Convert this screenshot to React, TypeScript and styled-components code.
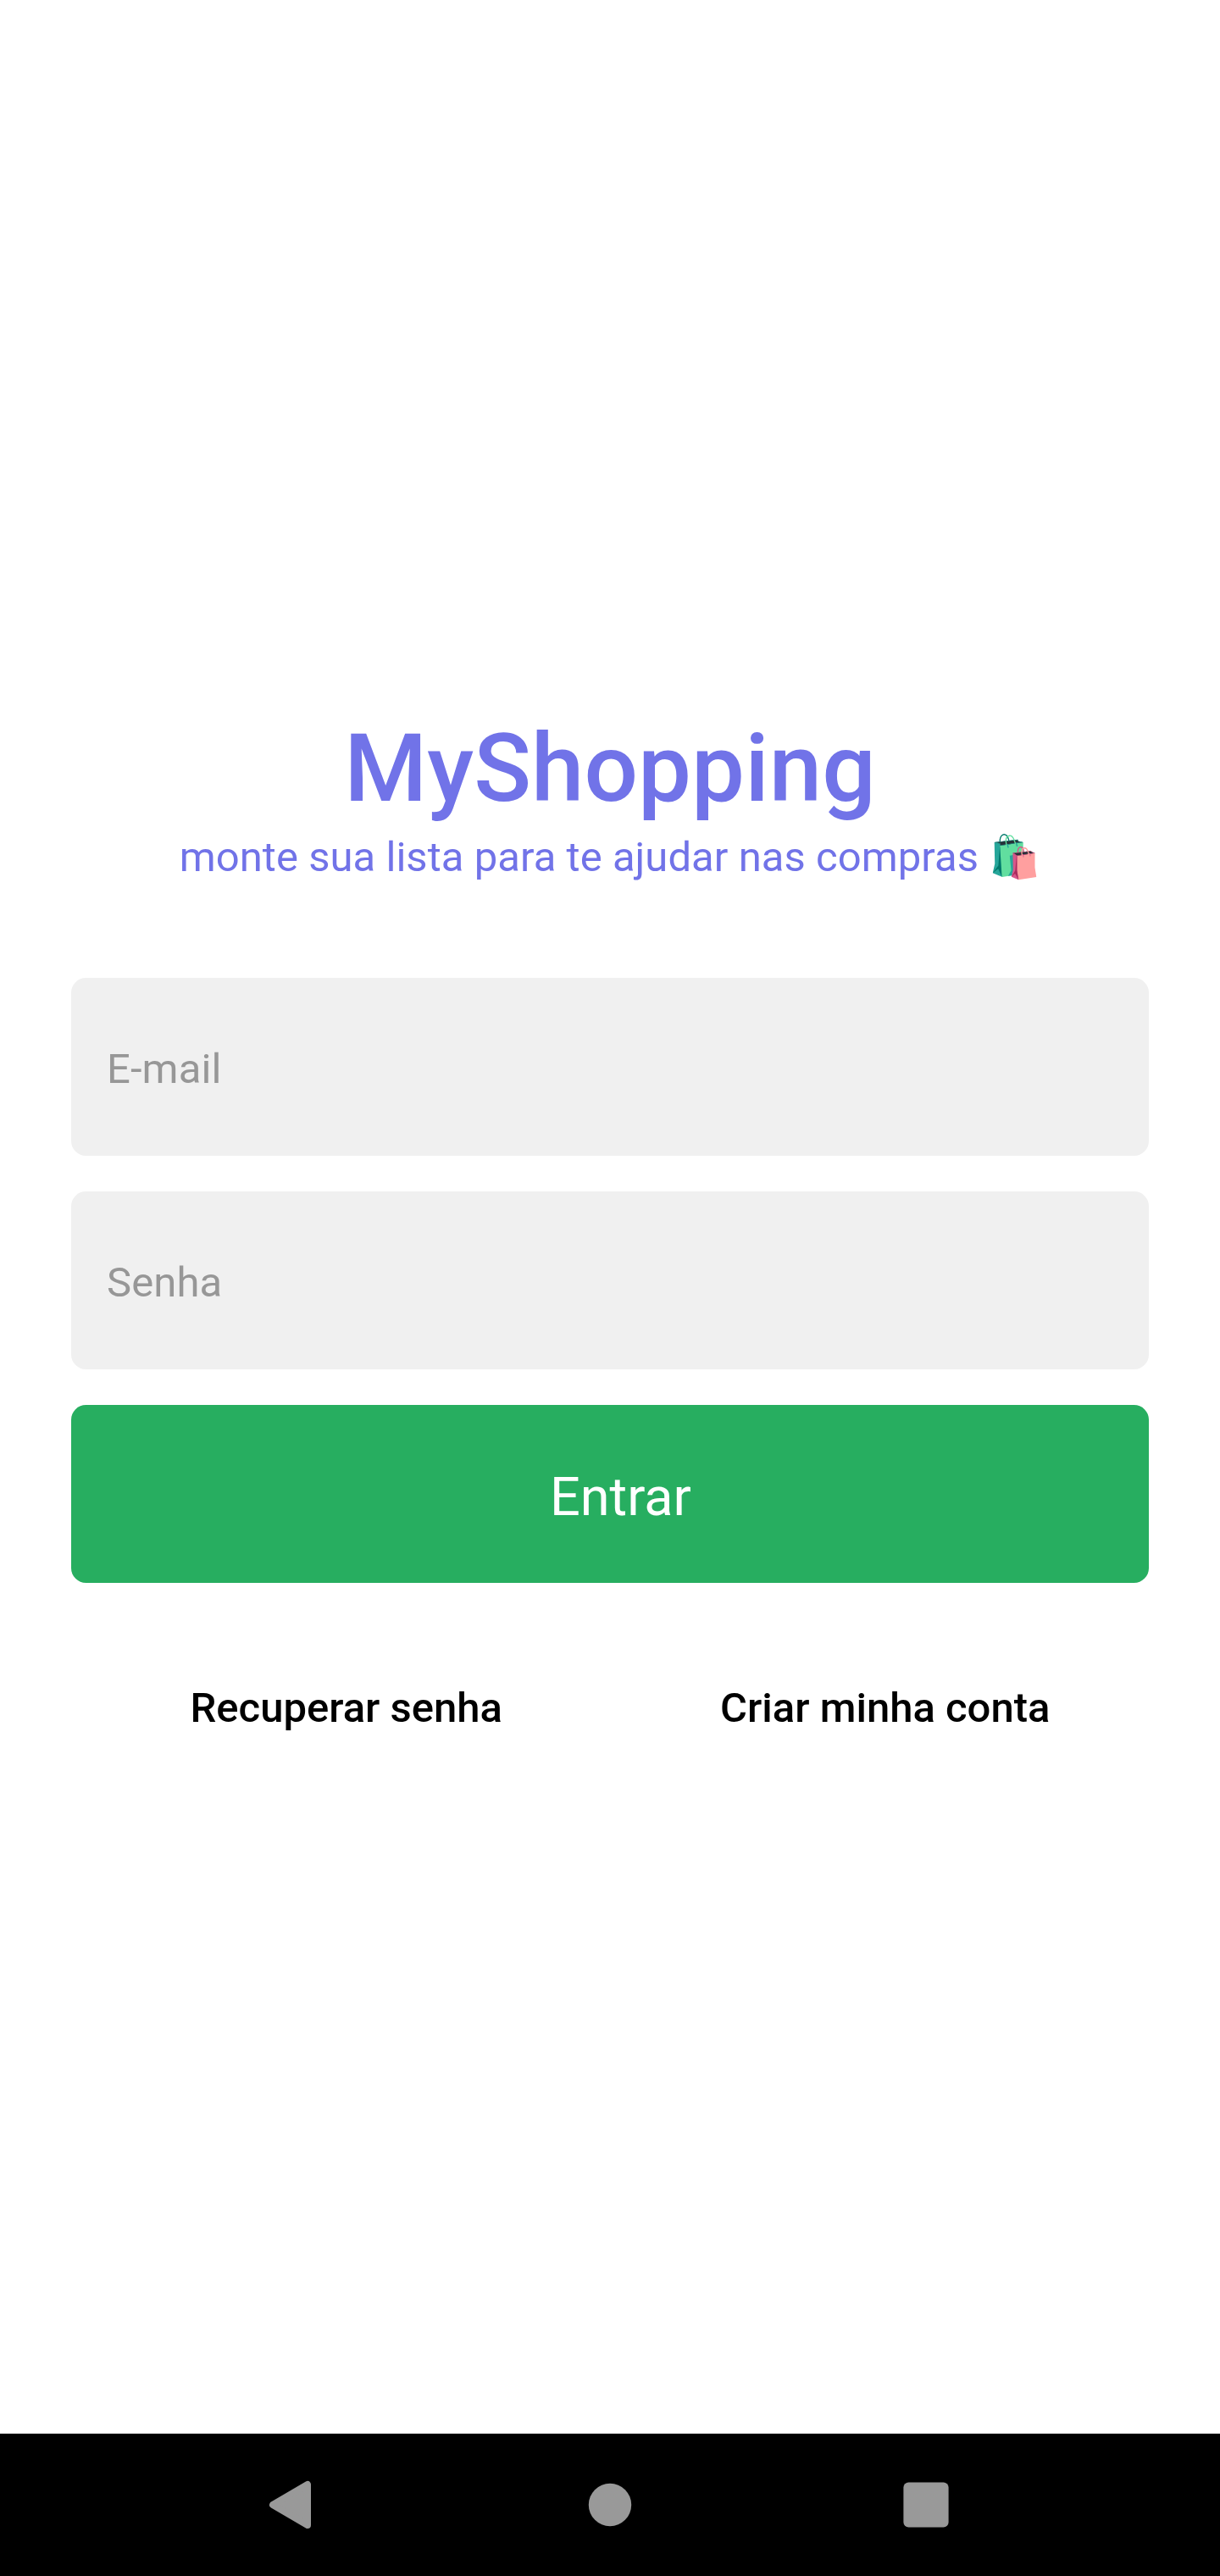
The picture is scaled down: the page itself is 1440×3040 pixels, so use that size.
import React from "react";
import styled, { createGlobalStyle } from "styled-components";

const Global = createGlobalStyle`
  * { box-sizing: border-box; }
  body { margin: 0; background: #fff; }
`;
const Screen = styled.div`
  width: 1440px;
  height: 3040px;
  display: flex;
  flex-direction: column;
  font-family: Roboto, "Liberation Sans", sans-serif;
  background: #fff;
`;
const Main = styled.main`
  flex: 1;
  padding: 841px 84px 0;
  display: flex;
  flex-direction: column;
`;
const Title = styled.h1`
  margin: 0;
  text-align: center;
  color: #7173e8;
  font-size: 112px;
  line-height: 131px;
  font-weight: 500;
  letter-spacing: 0.1px;
`;
const Subtitle = styled.p`
  margin: 0;
  height: 79px;
  text-align: center;
  color: #7173e8;
  font-size: 49px;
  line-height: 79px;
  letter-spacing: 0.05px;
`;
const Form = styled.form`
  margin-top: 103px;
  display: flex;
  flex-direction: column;
  gap: 42px;
`;
const Input = styled.input`
  height: 210px;
  border: 0;
  border-radius: 17.5px;
  padding: 5px 42px 0;
  background: #f0f0f0;
  color: #000;
  font: 400 49px Roboto, "Liberation Sans", sans-serif;
  letter-spacing: 0.1px;
  &::placeholder { color: #979797; opacity: 1; }
`;
const Submit = styled.button`
  height: 210px;
  border: 0;
  border-radius: 17.5px;
  padding: 7px 0 0 25px;
  background: #27ae60;
  color: #fff;
  font: 400 63px Roboto, "Liberation Sans", sans-serif;
`;
const Links = styled.div`
  margin: 119px -12px 0 12px;
  display: flex;
  justify-content: space-around;
`;
const LinkText = styled.span`
  font-size: 49px;
  line-height: 57px;
  font-weight: 500;
  color: #000;
`;
const NavBar = styled.nav`
  height: 168px;
  padding: 0 305px;
  background: #000;
  display: flex;
  align-items: center;
  justify-content: space-between;
`;
const NavIcon = styled.svg`
  width: 84px;
  height: 84px;
  display: block;
  fill: #999;
`;

export default function App() {
  return (
    <Screen>
      <Global />
      <Main>
        <Title>MyShopping</Title>
        <Subtitle>monte sua lista para te ajudar nas compras 🛍️</Subtitle>
        <Form>
          <Input placeholder="E-mail" />
          <Input placeholder="Senha" />
          <Submit type="button">Entrar</Submit>
        </Form>
        <Links>
          <LinkText>Recuperar senha</LinkText>
          <LinkText>Criar minha conta</LinkText>
        </Links>
      </Main>
      <NavBar>
        <NavIcon viewBox="0 0 84 84">
          <path d="M17 42 58 18V66Z" stroke="#999" strokeWidth="8" strokeLinejoin="round" />
        </NavIcon>
        <NavIcon viewBox="0 0 84 84">
          <circle cx="42" cy="42" r="25.2" />
        </NavIcon>
        <NavIcon viewBox="0 0 84 84">
          <rect x="15.4" y="15.4" width="53.2" height="53.2" rx="6" />
        </NavIcon>
      </NavBar>
    </Screen>
  );
}
